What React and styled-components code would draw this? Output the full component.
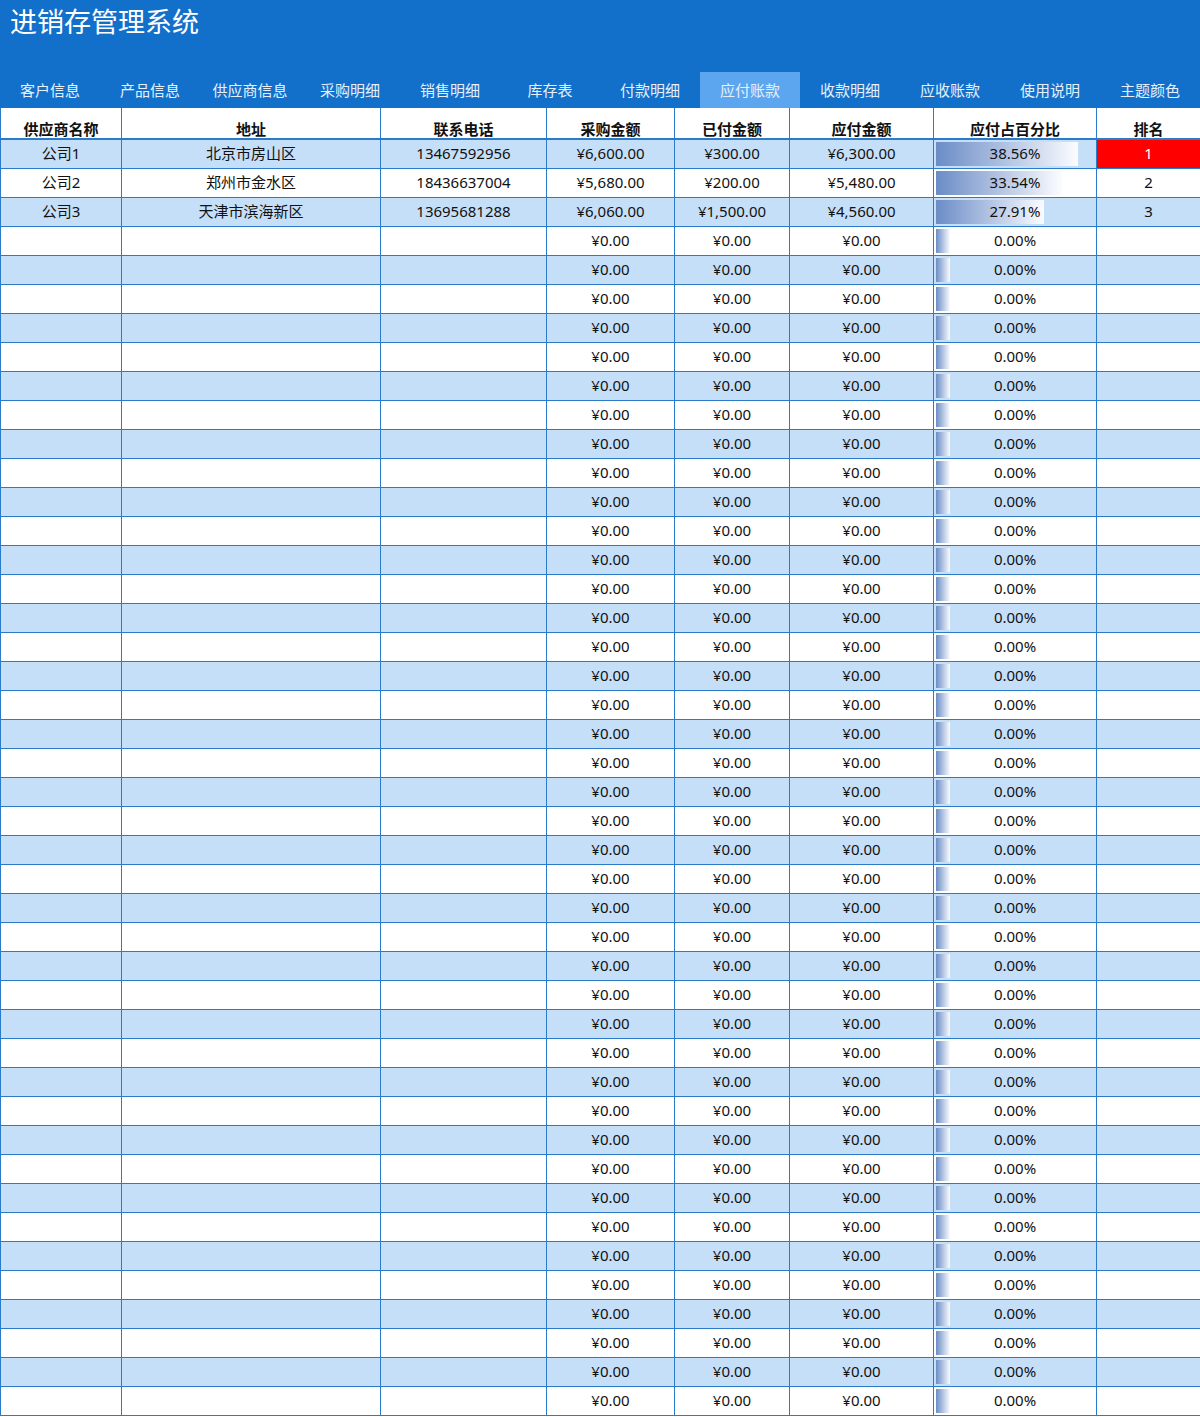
import styled, { createGlobalStyle } from "styled-components";

const GlobalStyle = createGlobalStyle`
  body {
    margin: 0;
    background: #ffffff;
    font-family: "Noto Sans", "Noto Sans CJK SC", sans-serif;
  }
`;

const Page = styled.div`
  width: 1200px;
  overflow: hidden;
`;

const Header = styled.header`
  background: #1270cb;
  height: 108px;
  display: flex;
  flex-direction: column;
  justify-content: space-between;
`;

const Title = styled.h1`
  margin: 0;
  padding: 3px 0 0 10px;
  color: #ffffff;
  font-size: 27px;
  font-weight: 400;
  line-height: 38px;
`;

const Tabs = styled.nav`
  display: flex;
  height: 36px;
`;

const Tab = styled.div`
  width: 100px;
  display: flex;
  align-items: center;
  justify-content: center;
  padding-bottom: 2px;
  box-sizing: border-box;
  color: #e6f0fb;
  font-size: 15px;
  background: ${(props) => (props.active ? "#5ba6ee" : "transparent")};
`;

const Table = styled.table`
  width: 1200px;
  border-collapse: collapse;
  table-layout: fixed;
  font-size: 15px;
  color: #111;
`;

const Th = styled.th`
  height: 30px;
  padding: 0;
  vertical-align: bottom;
  font-weight: 700;
  font-size: 15px;
  line-height: 18px;
  border-left: 1px solid #2b7bcb;
  border-right: 1px solid #2b7bcb;
  border-bottom: 2px solid #2b7bcb;
  background: #ffffff;
`;

const Row = styled.tr`
  height: 29px;
  background: ${(props) => (props.striped ? "#c6dff8" : "#ffffff")};
`;

const Td = styled.td`
  padding: 0 0 1px;
  text-align: center;
  border: 1px solid #2b7bcb;
  line-height: 18px;
  white-space: nowrap;
  background: ${(props) => (props.hot ? "#ff0000" : "transparent")};
  color: ${(props) => (props.hot ? "#ffffff" : "#111")};
`;

const BarCell = styled.td`
  padding: 0 0 1px;
  border: 1px solid #2b7bcb;
  position: relative;
  text-align: center;
`;

const Bar = styled.div`
  position: absolute;
  left: 2px;
  top: 2px;
  bottom: 2px;
  background: linear-gradient(to right, #6b8cc6, #fbfcff);
`;

const BarText = styled.span`
  position: relative;
  line-height: 18px;
`;

const tabs = [
  "客户信息",
  "产品信息",
  "供应商信息",
  "采购明细",
  "销售明细",
  "库存表",
  "付款明细",
  "应付账款",
  "收款明细",
  "应收账款",
  "使用说明",
  "主题颜色",
];

const cols = [
  { name: "供应商名称", w: 121 },
  { name: "地址", w: 259 },
  { name: "联系电话", w: 166 },
  { name: "采购金额", w: 128 },
  { name: "已付金额", w: 115 },
  { name: "应付金额", w: 144 },
  { name: "应付占百分比", w: 163 },
  { name: "排名", w: 104 },
];

const suppliers = [
  { name: "公司1", addr: "北京市房山区", tel: "13467592956", buy: "¥6,600.00", paid: "¥300.00", due: "¥6,300.00", pct: "38.56%", bar: 142, rank: "1" },
  { name: "公司2", addr: "郑州市金水区", tel: "18436637004", buy: "¥5,680.00", paid: "¥200.00", due: "¥5,480.00", pct: "33.54%", bar: 126, rank: "2" },
  { name: "公司3", addr: "天津市滨海新区", tel: "13695681288", buy: "¥6,060.00", paid: "¥1,500.00", due: "¥4,560.00", pct: "27.91%", bar: 108, rank: "3" },
];

const blank = { name: "", addr: "", tel: "", buy: "¥0.00", paid: "¥0.00", due: "¥0.00", pct: "0.00%", bar: 14, rank: "" };

const rows = [...suppliers, ...Array.from({ length: 41 }, () => blank)];

const App = () => {
  return (
    <>
      <GlobalStyle />
      <Page>
        <Header>
          <Title>进销存管理系统</Title>
          <Tabs>
            {tabs.map((t) => (
              <Tab key={t} active={t === "应付账款"}>
                {t}
              </Tab>
            ))}
          </Tabs>
        </Header>
        <Table>
          <colgroup>
            {cols.map((c) => (
              <col key={c.name} style={{ width: c.w }} />
            ))}
          </colgroup>
          <thead>
            <tr>
              {cols.map((c) => (
                <Th key={c.name}>{c.name}</Th>
              ))}
            </tr>
          </thead>
          <tbody>
            {rows.map((r, i) => (
              <Row key={i} striped={i % 2 === 0}>
                <Td>{r.name}</Td>
                <Td>{r.addr}</Td>
                <Td>{r.tel}</Td>
                <Td>{r.buy}</Td>
                <Td>{r.paid}</Td>
                <Td>{r.due}</Td>
                <BarCell>
                  <Bar style={{ width: r.bar }} />
                  <BarText>{r.pct}</BarText>
                </BarCell>
                <Td hot={r.rank === "1"}>{r.rank}</Td>
              </Row>
            ))}
          </tbody>
        </Table>
      </Page>
    </>
  );
};

export default App;
